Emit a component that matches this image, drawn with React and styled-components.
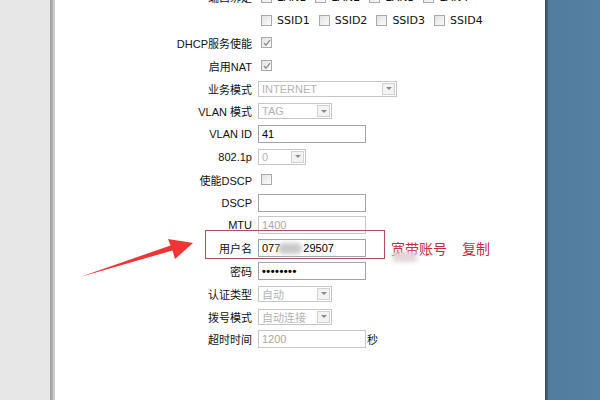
import React from "react";
import styled, { createGlobalStyle } from "styled-components";

const GlobalStyle = createGlobalStyle`
  html, body {
    margin: 0;
    padding: 0;
  }
  body {
    width: 600px;
    height: 400px;
    overflow: hidden;
    background: #fff;
    font-family: "Liberation Sans", "Noto Sans CJK SC", sans-serif;
  }
`;

const Page = styled.div`
  position: relative;
  display: flex;
  width: 600px;
  height: 400px;
  overflow: hidden;
`;

const LeftRail = styled.div`
  width: 50px;
  flex-shrink: 0;
  background: #e7e7e7;
`;

const RailEdge = styled.div`
  width: 5px;
  flex-shrink: 0;
  background: linear-gradient(to right, #9c9c9c, #b4b4b4 50%, #d8d8d8);
`;

const Content = styled.div`
  flex: 1;
  background: #fff;
`;

const RightRail = styled.div`
  width: 55px;
  flex-shrink: 0;
  background: linear-gradient(
    to right,
    #2b4560 0,
    #3d5f7f 2px,
    #527b9d 4px,
    #5680a2 100%
  );
`;

const Form = styled.div`
  display: flex;
  flex-direction: column;
  margin-top: -14px;
`;

const Row = styled.div`
  position: relative;
  display: grid;
  grid-template-columns: 197px auto;
  column-gap: 6px;
  height: 22.8px;
  align-items: center;
`;

const Label = styled.div`
  text-align: right;
  font-size: 11px;
  color: #111;
  white-space: nowrap;
`;

const Field = styled.div`
  display: flex;
  align-items: center;
`;

const TextBox = styled.div`
  box-sizing: border-box;
  width: ${(p) => p.$w}px;
  height: 18px;
  padding: 0 3px;
  border: 1px solid ${(p) => (p.$disabled ? "#c4c8cc" : "#9ea4ab")};
  font-size: 11px;
  line-height: 16px;
  color: ${(p) => (p.$disabled ? "#a8a8a8" : "#000")};
  display: flex;
  align-items: center;
  white-space: nowrap;
`;

const Blur = styled.span`
  display: inline-block;
  width: 24px;
  height: 11px;
  margin: 0 1px 0 -2px;
  border-radius: 6px;
  background: #c9c9c9;
  filter: blur(2px);
`;

const Dots = styled.span`
  font-size: 11px;
  font-weight: bold;
  letter-spacing: 0.5px;
`;

const Select = styled.div`
  box-sizing: border-box;
  width: ${(p) => p.$w}px;
  height: 16px;
  display: flex;
  align-items: center;
  padding-left: 3px;
  border: 1px solid #c6c6c6;
  font-size: 11px;
  color: #b4b4b4;
  white-space: nowrap;
`;

const DropButton = styled.span`
  margin-left: auto;
  margin-right: 1px;
  width: 13px;
  height: 12px;
  box-sizing: border-box;
  border: 1px solid #d2d2d2;
  background: #f3f3f3;
  display: flex;
  align-items: center;
  justify-content: center;
  &::after {
    content: "";
    border-left: 3px solid transparent;
    border-right: 3px solid transparent;
    border-top: 3px solid #8a8a8a;
  }
`;

const Checks = styled.div`
  display: flex;
  align-items: center;
  padding-left: 3px;
  gap: 9px;
`;

const CheckItem = styled.label`
  display: flex;
  align-items: center;
  gap: 5px;
  font-family: "DejaVu Sans", sans-serif;
  font-size: 11px;
  color: #111;
`;

const Box = styled.span`
  box-sizing: border-box;
  width: 11px;
  height: 11px;
  margin-left: ${(p) => (p.$solo ? 3 : 0)}px;
  border: 1px solid #a9a9a9;
  background: linear-gradient(135deg, #e2e2e2, #fbfbfb);
  display: flex;
  align-items: center;
  justify-content: center;
`;

const Unit = styled.span`
  margin-left: 1px;
  font-size: 11px;
  color: #111;
`;

const Highlight = styled.div`
  position: absolute;
  left: 150px;
  top: -7px;
  width: 180px;
  height: 29px;
  box-sizing: border-box;
  border: 1.5px solid #b24e5a;
  pointer-events: none;
`;

const Note = styled.span`
  position: relative;
  margin-left: ${(p) => p.$gap}px;
  font-family: "Noto Sans CJK SC", sans-serif;
  font-size: 14px;
  color: #bf3040;
  white-space: nowrap;
`;

const Smudge = styled.span`
  position: absolute;
  left: 2px;
  top: 14px;
  width: 24px;
  height: 10px;
  background: #e2d6d8;
  filter: blur(2px);
`;

const Overlay = styled.svg`
  position: absolute;
  left: 0;
  top: 0;
  pointer-events: none;
`;

const Check = ({ on, solo }) => (
  <Box $solo={solo}>
    {on && (
      <svg width="8" height="8" viewBox="0 0 8 8">
        <path d="M1 4 L3 6.2 L7 1.2" fill="none" stroke="#8c8c8c" strokeWidth="1.3" />
      </svg>
    )}
  </Box>
);

const Group = ({ names }) => (
  <Checks>
    {names.map((n) => (
      <CheckItem key={n}>
        <Check />
        {n}
      </CheckItem>
    ))}
  </Checks>
);

const Dropdown = ({ w, value }) => (
  <Select $w={w}>
    {value}
    <DropButton />
  </Select>
);

export default function App() {
  return (
    <>
      <GlobalStyle />
      <Page>
        <LeftRail />
        <RailEdge />
        <Content>
          <Form>
            <Row>
              <Label>端口绑定</Label>
              <Group names={["LAN1", "LAN2", "LAN3", "LAN4"]} />
            </Row>
            <Row>
              <Label />
              <Group names={["SSID1", "SSID2", "SSID3", "SSID4"]} />
            </Row>
            <Row>
              <Label>DHCP服务使能</Label>
              <Field>
                <Check on solo />
              </Field>
            </Row>
            <Row>
              <Label>启用NAT</Label>
              <Field>
                <Check on solo />
              </Field>
            </Row>
            <Row>
              <Label>业务模式</Label>
              <Field>
                <Dropdown w={139} value="INTERNET" />
              </Field>
            </Row>
            <Row>
              <Label>VLAN 模式</Label>
              <Field>
                <Dropdown w={74} value="TAG" />
              </Field>
            </Row>
            <Row>
              <Label>VLAN ID</Label>
              <Field>
                <TextBox $w={108}>41</TextBox>
              </Field>
            </Row>
            <Row>
              <Label>802.1p</Label>
              <Field>
                <Dropdown w={48} value="0" />
              </Field>
            </Row>
            <Row>
              <Label>使能DSCP</Label>
              <Field>
                <Check solo />
              </Field>
            </Row>
            <Row>
              <Label>DSCP</Label>
              <Field>
                <TextBox $w={108} />
              </Field>
            </Row>
            <Row>
              <Label>MTU</Label>
              <Field>
                <TextBox $w={108} $disabled>
                  1400
                </TextBox>
              </Field>
            </Row>
            <Row>
              <Highlight />
              <Label>用户名</Label>
              <Field>
                <TextBox $w={108}>
                  077
                  <Blur />
                  29507
                </TextBox>
                <Note $gap={25}>
                  宽带账号
                  <Smudge />
                </Note>
                <Note $gap={15}>复制</Note>
              </Field>
            </Row>
            <Row>
              <Label>密码</Label>
              <Field>
                <TextBox $w={108}>
                  <Dots>••••••••</Dots>
                </TextBox>
              </Field>
            </Row>
            <Row>
              <Label>认证类型</Label>
              <Field>
                <Dropdown w={74} value="自动" />
              </Field>
            </Row>
            <Row>
              <Label>拨号模式</Label>
              <Field>
                <Dropdown w={74} value="自动连接" />
              </Field>
            </Row>
            <Row>
              <Label>超时时间</Label>
              <Field>
                <TextBox $w={108} $disabled>
                  1200
                </TextBox>
                <Unit>秒</Unit>
              </Field>
            </Row>
          </Form>
        </Content>
        <RightRail />
        <Overlay width="600" height="400" viewBox="0 0 600 400">
          <polygon
            points="80,277 170.5,245.5 168,239 193,243 175,259 172.5,250.5"
            fill="#ef3535"
          />
        </Overlay>
      </Page>
    </>
  );
}
